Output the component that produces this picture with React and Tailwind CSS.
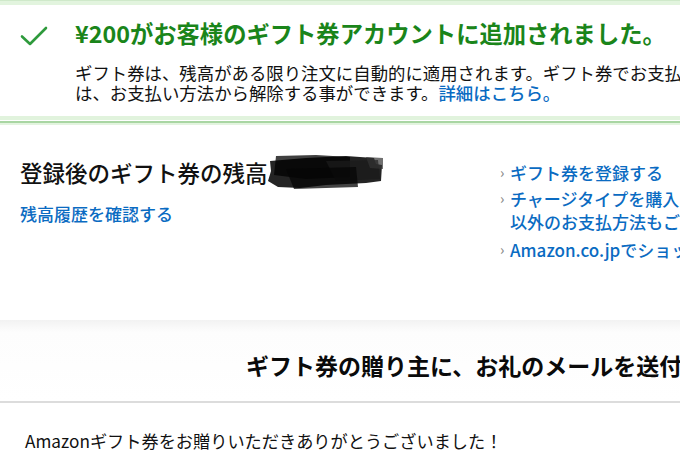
import React from "react";

const font = { fontFamily: '"Noto Sans CJK JP", "Noto Sans", sans-serif' };

function Check() {
  return (
    <svg width="28" height="22" viewBox="0 0 28 22" fill="none">
      <path d="M2 11.5 L10 19 L26 3" stroke="#2e9a3c" strokeWidth="2.6" strokeLinecap="round" strokeLinejoin="round" />
    </svg>
  );
}

function Redacted() {
  return (
    <svg width="118" height="34" viewBox="0 0 118 34" className="shrink-0 -ml-[2px]">
      <polygon points="4,6 40,3 80,1 108,3 110,9 116,10 115,26 100,28 60,30 34,33 12,32 2,26 5,16" fill="#111" opacity="0.92" />
      <polygon points="10,1 50,0 84,2 84,22 40,24 8,20" fill="#000" opacity="0.75" />
      <polygon points="60,6 112,5 114,24 70,26" fill="#1a1a1a" opacity="0.8" />
      <polygon points="20,14 90,12 92,32 28,34" fill="#050505" opacity="0.75" />
      <polygon points="100,2 117,3 117,14 104,13" fill="#333" opacity="0.7" />
    </svg>
  );
}

function Chev() {
  return <span className="w-[10px] shrink-0 text-[#8a8a8a] text-[14px] leading-[23px]">›</span>;
}

export default function App() {
  return (
    <div className="w-[680px] h-[470px] overflow-hidden bg-white text-[#111]" style={font}>
      {/* success alert */}
      <div>
        <div className="h-[1px] bg-[#cfe9ca]" />
        <div className="h-[4px] bg-[#e2f4de]" />
        <div className="flex pl-[20px] pt-[14px] pb-[13px]">
          <div className="w-[55px] shrink-0 pt-[6px]">
            <Check />
          </div>
          <div className="min-w-0">
            <div className="whitespace-nowrap text-[23.3px] leading-[28px] font-bold text-[#1a851a]">
              ¥200がお客様のギフト券アカウントに追加されました。
            </div>
            <div className="mt-[16px] whitespace-nowrap text-[17.4px] leading-[20px]">
              ギフト券は、残高がある限り注文に自動的に適用されます。ギフト券でお支払いになりたくない場合
              <br />
              は、お支払い方法から解除する事ができます。<span className="text-[#0a6bc2] font-medium">詳細はこちら。</span>
            </div>
          </div>
        </div>
        <div className="h-[4px] bg-[#e1f3dd]" />
        <div className="h-[1px] bg-white" />
        <div className="h-[2px] bg-[#a9d6a3]" />
        <div className="h-[2px] bg-[#e3f4df]" />
      </div>

      {/* balance section */}
      <div className="flex h-[195px] pt-[32px]">
        <div className="w-[480px] shrink-0 pl-[20px]">
          <div className="flex items-center h-[30px]">
            <span className="whitespace-nowrap text-[22.5px] leading-[30px] font-medium">登録後のギフト券の残高</span>
            <Redacted />
          </div>
          <div className="mt-[15px] text-[17px] leading-[24px] font-medium text-[#0a6bc2]">残高履歴を確認する</div>
        </div>
        <div className="pl-[20px] w-[340px] shrink-0 text-[17px] font-medium text-[#0a6bc2]">
          <div className="flex h-[30px] items-center whitespace-nowrap">
            <Chev />
            <span className="leading-[23px]">ギフト券を登録する</span>
          </div>
          <div className="flex whitespace-nowrap">
            <Chev />
            <span className="leading-[23px]">
              チャージタイプを購入する（クレジットカード
              <br />
              以外のお支払方法もご利用いただけます）
            </span>
          </div>
          <div className="flex mt-[5px] whitespace-nowrap">
            <Chev />
            <span className="leading-[23px]">Amazon.co.jpでショッピングを続ける</span>
          </div>
        </div>
      </div>

      {/* thank-you header band */}
      <div className="h-[83px] bg-gradient-to-b from-[#f2f2f2] via-[#fdfdfd] via-15% to-white border-b-[2px] border-[#dcdcdc] flex items-center pl-[246px]">
        <span className="whitespace-nowrap text-[23px] leading-[30px] font-bold text-[#0a0a0a] pt-[8px]">
          ギフト券の贈り主に、お礼のメールを送付しましょう
        </span>
      </div>

      <div className="pl-[25px] pt-[26px] text-[17.2px] leading-[24px] whitespace-nowrap">
        Amazonギフト券をお贈りいただきありがとうございました！
      </div>
    </div>
  );
}
